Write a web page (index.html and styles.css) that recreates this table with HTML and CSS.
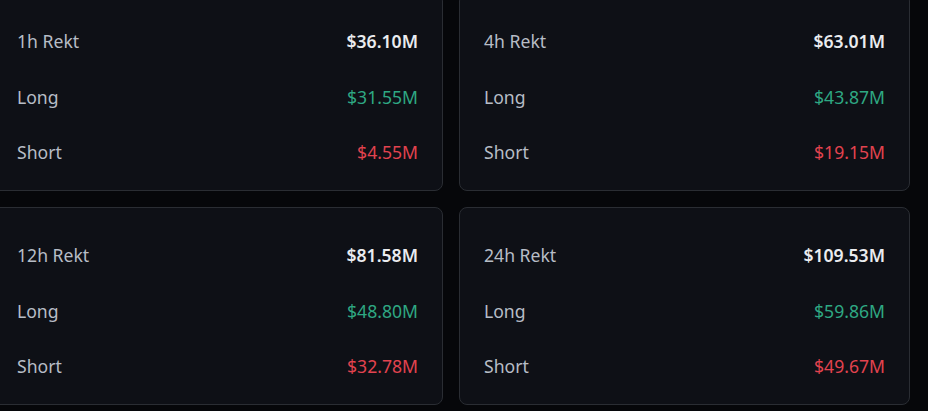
FILE: index.html
```html
<!DOCTYPE html>
<html lang="en">

<head>
    <meta charset="UTF-8">
    <meta name="viewport" content="width=device-width, initial-scale=1.0">
    <title>Rekt</title>
    <link rel="stylesheet" href="styles.css">
</head>

<body>
    <div id="rekt">
        <div class="card">
            <div class="row"><span class="label">1h Rekt</span><span class="total">$36.10M</span></div>
            <div class="row"><span class="label">Long</span><span class="long">$31.55M</span></div>
            <div class="row"><span class="label">Short</span><span class="short">$4.55M</span></div>
        </div>
        <div class="card">
            <div class="row"><span class="label">4h Rekt</span><span class="total">$63.01M</span></div>
            <div class="row"><span class="label">Long</span><span class="long">$43.87M</span></div>
            <div class="row"><span class="label">Short</span><span class="short">$19.15M</span></div>
        </div>
        <div class="card">
            <div class="row"><span class="label">12h Rekt</span><span class="total">$81.58M</span></div>
            <div class="row"><span class="label">Long</span><span class="long">$48.80M</span></div>
            <div class="row"><span class="label">Short</span><span class="short">$32.78M</span></div>
        </div>
        <div class="card">
            <div class="row"><span class="label">24h Rekt</span><span class="total">$109.53M</span></div>
            <div class="row"><span class="label">Long</span><span class="long">$59.86M</span></div>
            <div class="row"><span class="label">Short</span><span class="short">$49.67M</span></div>
        </div>
    </div>
</body>

</html>
```

FILE: styles.css
```css
body {
    font-family: "Noto Sans", Arial, sans-serif;
    background-color: #06070a;
    margin: 0;
    padding: 0;
    overflow: hidden;
}

#rekt {
    display: grid;
    grid-template-columns: 451px 451px;
    gap: 16px;
    margin-top: -7px;
    margin-left: -8px;
}

.card {
    height: 198px;
    box-sizing: border-box;
    padding: 35px 24px 28px 24px;
    background-color: #0e1016;
    border: 1px solid #2a2d33;
    border-radius: 8px;
    display: flex;
    flex-direction: column;
    gap: 31.5px;
}

.row {
    display: flex;
    justify-content: space-between;
    align-items: center;
    height: 24px;
    font-size: 17.6px;
}

.label {
    color: #b7bdc6;
}

.total {
    color: #eaecef;
    font-weight: 600;
}

.long {
    color: #2ea883;
}

.short {
    color: #e2434f;
}
```
